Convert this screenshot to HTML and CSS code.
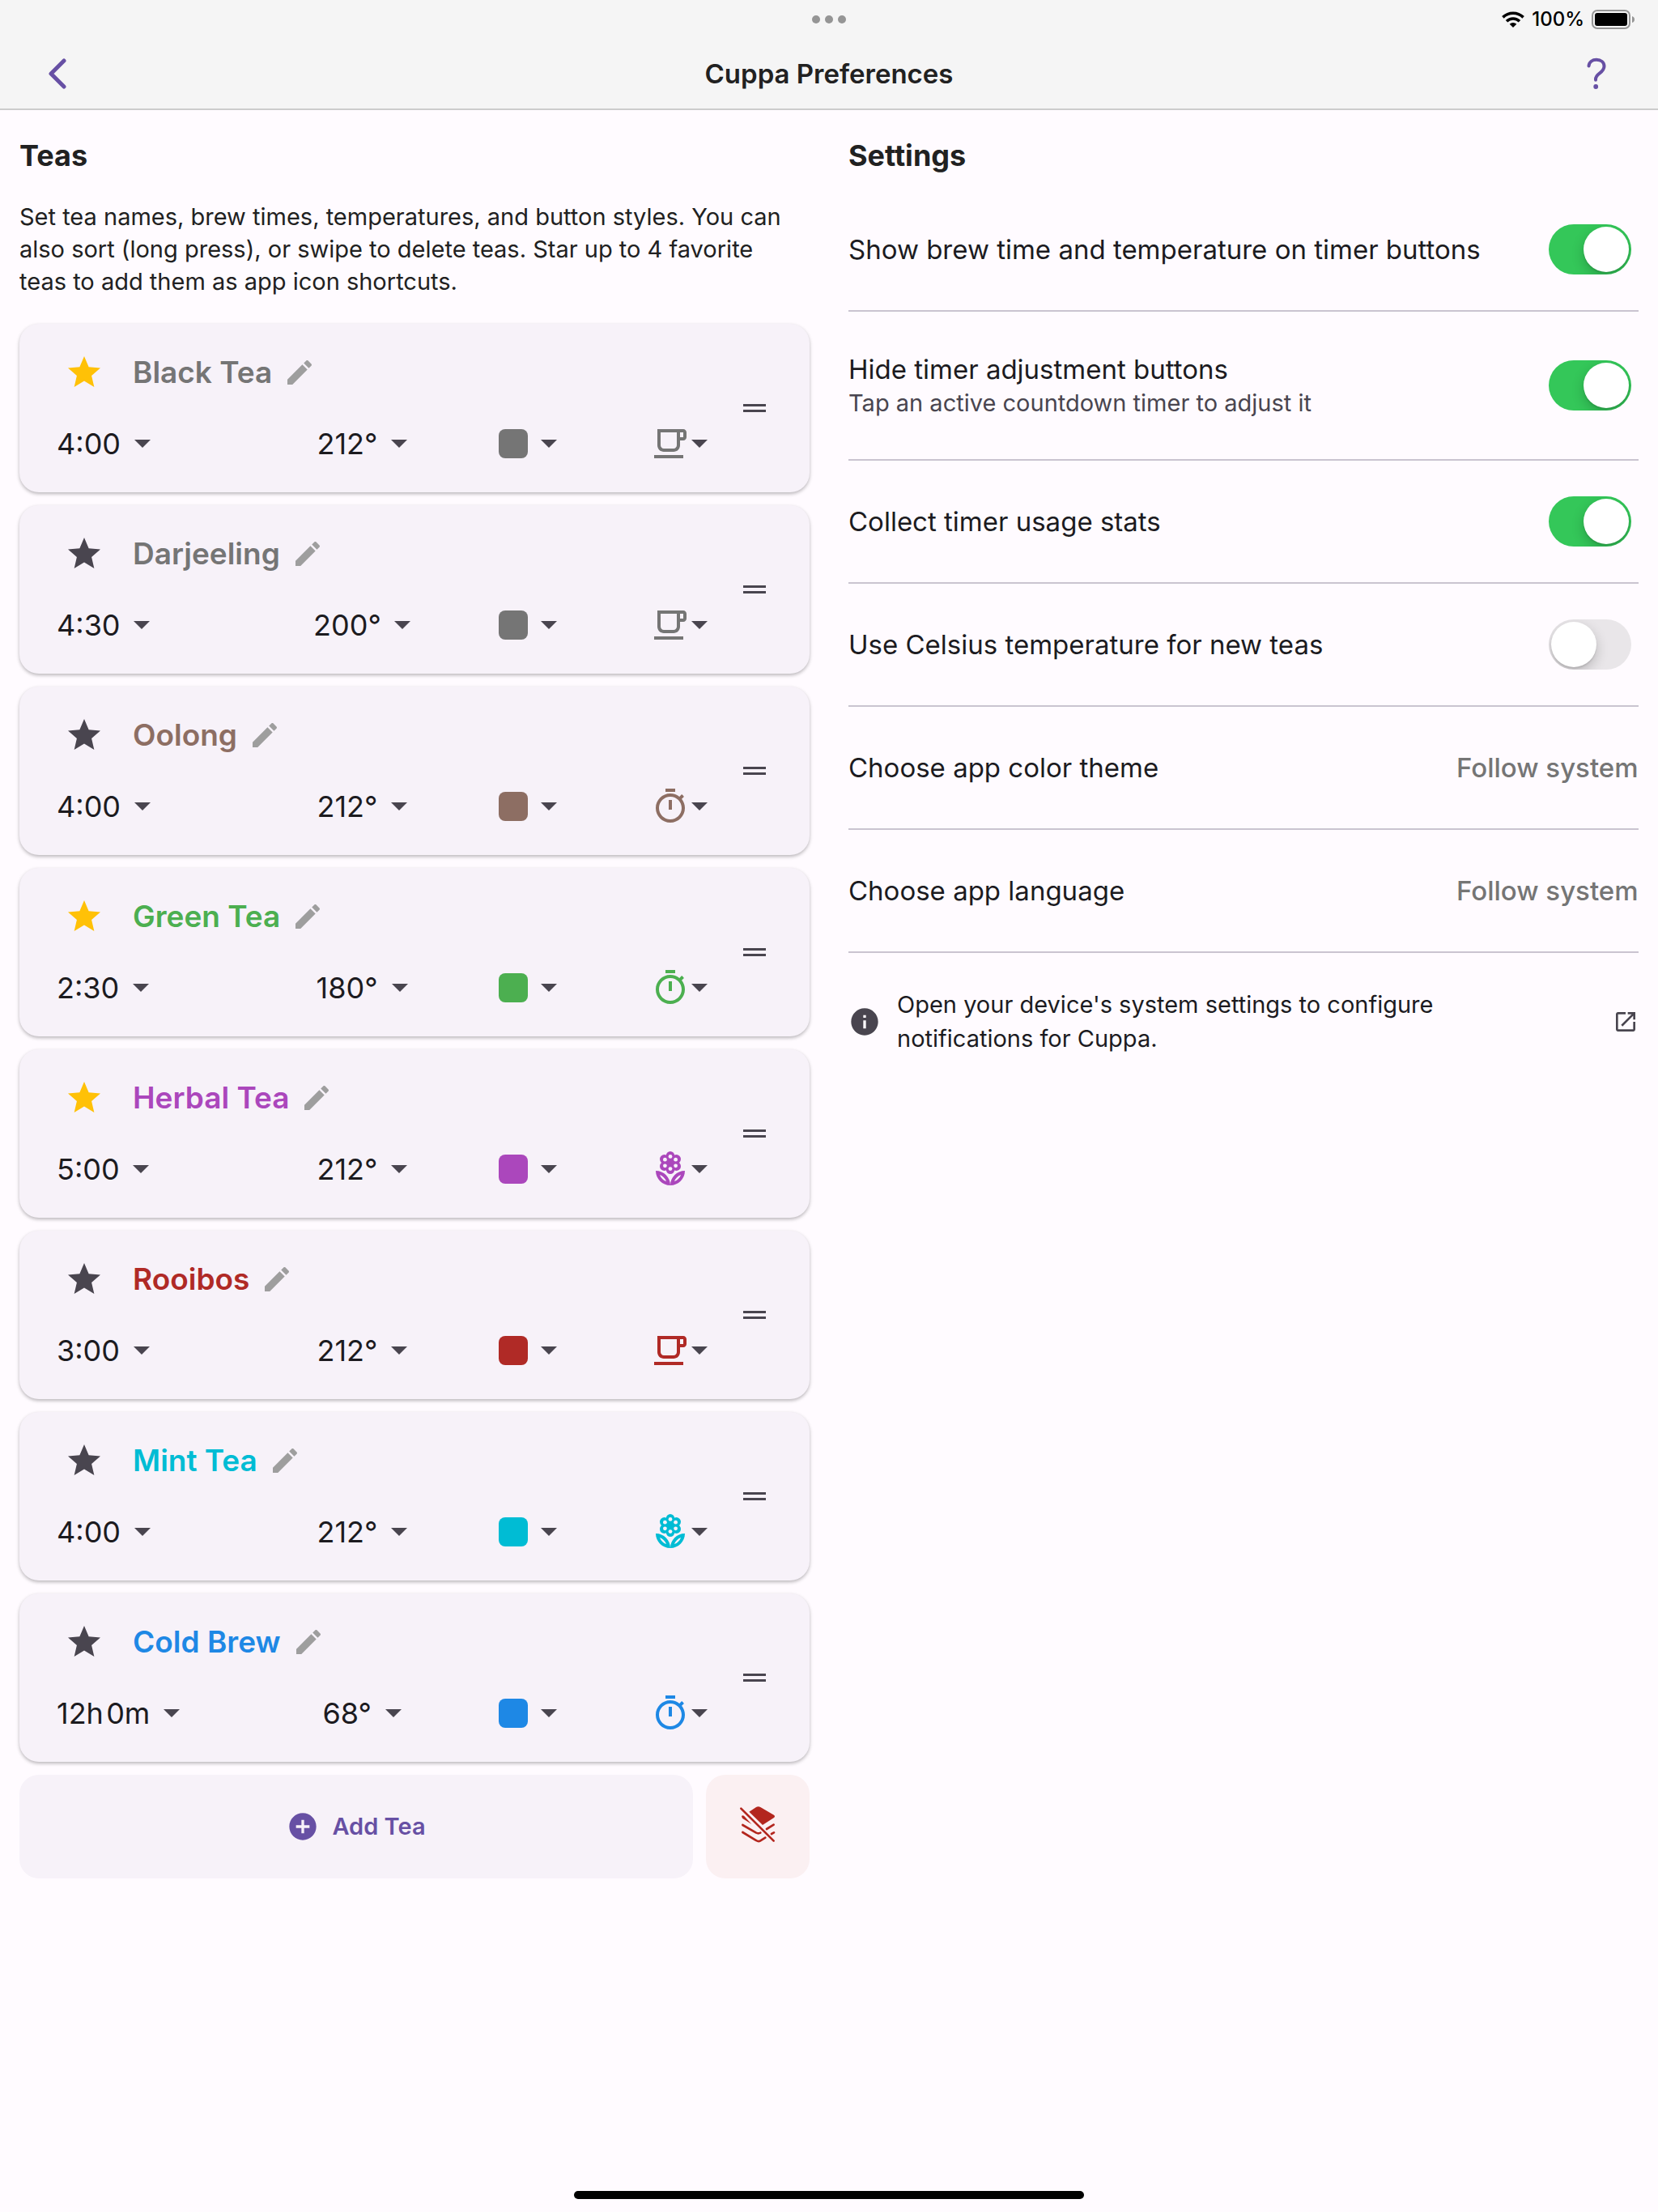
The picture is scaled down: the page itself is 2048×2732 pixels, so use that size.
FILE: index.html
```html
<!DOCTYPE html>
<html lang="en">
<head>
<meta charset="utf-8">
<meta name="viewport" content="width=device-width, initial-scale=1">
<title>Cuppa Preferences</title>
<link rel="stylesheet" href="styles.css">
</head>
<body>
<svg class="sprite" aria-hidden="true">
  <symbol id="star" viewBox="0 0 24 24"><path d="M12 17.27L18.18 21l-1.64-7.03L22 9.24l-7.19-.61L12 2 9.19 8.63 2 9.24l5.46 4.73L5.82 21z"/></symbol>
  <symbol id="edit" viewBox="0 0 24 24"><path d="M3 17.25V21h3.75L17.81 9.94l-3.75-3.75L3 17.25zM20.71 7.04c.39-.39.39-1.02 0-1.41l-2.34-2.34c-.39-.39-1.02-.39-1.41 0l-1.83 1.83 3.75 3.75 1.83-1.83z"/></symbol>
  <symbol id="arrow" viewBox="0 0 20 10"><path d="M0 0h20L10 10z"/></symbol>
  <symbol id="handle" viewBox="0 0 28 10"><path d="M0 0h28v3H0zM0 7h28v3H0z"/></symbol>
  <symbol id="cup" viewBox="0 0 24 24"><path d="M20 3H4v10c0 2.21 1.79 4 4 4h6c2.21 0 4-1.79 4-4v-3h2c1.11 0 2-.9 2-2V5c0-1.11-.89-2-2-2zm-4 10c0 1.1-.9 2-2 2H8c-1.1 0-2-.9-2-2V5h10v8zm4-5h-2V5h2v3zM2 19h18v2H2z"/></symbol>
  <symbol id="timer" viewBox="0 0 24 24"><path d="M15 1H9v2h6V1zm-4 13h2V8h-2v6zm8.03-6.61l1.42-1.42c-.43-.51-.9-.99-1.41-1.41l-1.42 1.42C16.07 4.74 14.12 4 12 4c-4.97 0-9 4.03-9 9s4.02 9 9 9 9-4.03 9-9c0-2.12-.74-4.07-1.97-5.61zM12 20c-3.87 0-7-3.13-7-7s3.13-7 7-7 7 3.13 7 7-3.13 7-7 7z"/></symbol>
  <symbol id="flower" viewBox="0 0 24 24">
    <path d="M12 22c4.97 0 9-4.03 9-9-4.97 0-9 4.03-9 9zm2.44-2.44c.71-1.9 2.22-3.42 4.12-4.12-.71 1.9-2.22 3.41-4.12 4.12zM3 13c0 4.97 4.03 9 9 9 0-4.97-4.03-9-9-9zm2.44 2.44c1.9.71 3.42 2.22 4.12 4.12-1.9-.71-3.41-2.22-4.12-4.12z"/>
    <circle cx="12" cy="3.6" r="2.6"/><circle cx="12" cy="12.4" r="2.6"/><circle cx="8.3" cy="5.8" r="2.8"/><circle cx="15.7" cy="5.8" r="2.8"/><circle cx="8.3" cy="10.2" r="2.8"/><circle cx="15.7" cy="10.2" r="2.8"/><circle cx="12" cy="8" r="4.4"/>
    <g class="petal-hole"><circle cx="12" cy="4.2" r="1.2"/><circle cx="12" cy="11.8" r="1.2"/><circle cx="8.7" cy="6.1" r="1.2"/><circle cx="15.3" cy="6.1" r="1.2"/><circle cx="8.7" cy="9.9" r="1.2"/><circle cx="15.3" cy="9.9" r="1.2"/></g>
  </symbol>
</svg>

<header class="header">
  <div class="status">
    <span class="dots" aria-hidden="true"><i></i><i></i><i></i></span>
    <div class="status-right">
      <svg class="wifi" viewBox="0 0 28 20" aria-hidden="true"><g fill="none" stroke="#000" stroke-width="3.6"><path d="M1.4 7.4a18 18 0 0 1 25.2 0"/><path d="M6 12.3a11.4 11.4 0 0 1 16 0"/></g><path d="M14 20l-4.3-4.3a6.2 6.2 0 0 1 8.6 0z"/></svg>
      <span>100%</span>
      <svg class="battery" viewBox="0 0 54 24" aria-hidden="true"><rect x="1" y="1" width="46" height="22" rx="6" fill="none" stroke="#959595" stroke-width="2"/><rect x="4" y="4" width="40" height="16" rx="3"/><path d="M50 8q3 1 3 4t-3 4z" fill="#959595"/></svg>
    </div>
  </div>
  <nav class="nav">
    <button class="icon-button back" aria-label="Back"><svg class="chevron" viewBox="0 0 24 40" aria-hidden="true"><path d="M21 4L5 20l16 16"/></svg></button>
    <h1>Cuppa Preferences</h1>
    <button class="icon-button help" aria-label="Help"><svg class="question" viewBox="0 0 24 40" aria-hidden="true"><path d="M2.5 10.5C3 5.5 7 2.8 12 2.8c5.5 0 9.5 3.2 9.5 8 0 4-2.3 6.200-5.500 8.600-3.400 2.500-5 4.300-5 7.600v.8"/><circle cx="11.2" cy="36" r="2.900"/></svg></button>
  </nav>
</header>

<main class="columns">
  <section>
    <h2>Teas</h2>
    <p class="intro">Set tea names, brew times, temperatures, and button styles. You can also sort (long press), or swipe to delete teas. Star up to 4 favorite teas to add them as app icon shortcuts.</p>
    <ul class="teas">
      <li class="tea gray">
        <div class="tea-body">
          <div class="tea-title"><button class="star on" aria-label="Unstar Black Tea"><svg><use href="#star"/></svg></button><button class="name">Black Tea<svg><use href="#edit"/></svg></button></div>
          <div class="tea-options">
            <label class="pick"><select aria-label="Brew time"><option>4:00</option></select><svg class="arrow"><use href="#arrow"/></svg></label>
            <label class="pick"><select aria-label="Temperature"><option>212°</option></select><svg class="arrow"><use href="#arrow"/></svg></label>
            <button class="pick" aria-label="Color"><span class="swatch"></span><svg class="arrow"><use href="#arrow"/></svg></button>
            <button class="pick icon-pick" aria-label="Icon"><svg class="glyph"><use href="#cup"/></svg><svg class="arrow"><use href="#arrow"/></svg></button>
          </div>
        </div>
        <button class="drag" aria-label="Reorder"><svg><use href="#handle"/></svg></button>
      </li>
      <li class="tea gray">
        <div class="tea-body">
          <div class="tea-title"><button class="star" aria-label="Star Darjeeling"><svg><use href="#star"/></svg></button><button class="name">Darjeeling<svg><use href="#edit"/></svg></button></div>
          <div class="tea-options">
            <label class="pick"><select aria-label="Brew time"><option>4:30</option></select><svg class="arrow"><use href="#arrow"/></svg></label>
            <label class="pick"><select aria-label="Temperature"><option>200°</option></select><svg class="arrow"><use href="#arrow"/></svg></label>
            <button class="pick" aria-label="Color"><span class="swatch"></span><svg class="arrow"><use href="#arrow"/></svg></button>
            <button class="pick icon-pick" aria-label="Icon"><svg class="glyph"><use href="#cup"/></svg><svg class="arrow"><use href="#arrow"/></svg></button>
          </div>
        </div>
        <button class="drag" aria-label="Reorder"><svg><use href="#handle"/></svg></button>
      </li>
      <li class="tea brown">
        <div class="tea-body">
          <div class="tea-title"><button class="star" aria-label="Star Oolong"><svg><use href="#star"/></svg></button><button class="name">Oolong<svg><use href="#edit"/></svg></button></div>
          <div class="tea-options">
            <label class="pick"><select aria-label="Brew time"><option>4:00</option></select><svg class="arrow"><use href="#arrow"/></svg></label>
            <label class="pick"><select aria-label="Temperature"><option>212°</option></select><svg class="arrow"><use href="#arrow"/></svg></label>
            <button class="pick" aria-label="Color"><span class="swatch"></span><svg class="arrow"><use href="#arrow"/></svg></button>
            <button class="pick icon-pick" aria-label="Icon"><svg class="glyph"><use href="#timer"/></svg><svg class="arrow"><use href="#arrow"/></svg></button>
          </div>
        </div>
        <button class="drag" aria-label="Reorder"><svg><use href="#handle"/></svg></button>
      </li>
      <li class="tea green">
        <div class="tea-body">
          <div class="tea-title"><button class="star on" aria-label="Unstar Green Tea"><svg><use href="#star"/></svg></button><button class="name">Green Tea<svg><use href="#edit"/></svg></button></div>
          <div class="tea-options">
            <label class="pick"><select aria-label="Brew time"><option>2:30</option></select><svg class="arrow"><use href="#arrow"/></svg></label>
            <label class="pick"><select aria-label="Temperature"><option>180°</option></select><svg class="arrow"><use href="#arrow"/></svg></label>
            <button class="pick" aria-label="Color"><span class="swatch"></span><svg class="arrow"><use href="#arrow"/></svg></button>
            <button class="pick icon-pick" aria-label="Icon"><svg class="glyph"><use href="#timer"/></svg><svg class="arrow"><use href="#arrow"/></svg></button>
          </div>
        </div>
        <button class="drag" aria-label="Reorder"><svg><use href="#handle"/></svg></button>
      </li>
      <li class="tea purple">
        <div class="tea-body">
          <div class="tea-title"><button class="star on" aria-label="Unstar Herbal Tea"><svg><use href="#star"/></svg></button><button class="name">Herbal Tea<svg><use href="#edit"/></svg></button></div>
          <div class="tea-options">
            <label class="pick"><select aria-label="Brew time"><option>5:00</option></select><svg class="arrow"><use href="#arrow"/></svg></label>
            <label class="pick"><select aria-label="Temperature"><option>212°</option></select><svg class="arrow"><use href="#arrow"/></svg></label>
            <button class="pick" aria-label="Color"><span class="swatch"></span><svg class="arrow"><use href="#arrow"/></svg></button>
            <button class="pick icon-pick" aria-label="Icon"><svg class="glyph"><use href="#flower"/></svg><svg class="arrow"><use href="#arrow"/></svg></button>
          </div>
        </div>
        <button class="drag" aria-label="Reorder"><svg><use href="#handle"/></svg></button>
      </li>
      <li class="tea red">
        <div class="tea-body">
          <div class="tea-title"><button class="star" aria-label="Star Rooibos"><svg><use href="#star"/></svg></button><button class="name">Rooibos<svg><use href="#edit"/></svg></button></div>
          <div class="tea-options">
            <label class="pick"><select aria-label="Brew time"><option>3:00</option></select><svg class="arrow"><use href="#arrow"/></svg></label>
            <label class="pick"><select aria-label="Temperature"><option>212°</option></select><svg class="arrow"><use href="#arrow"/></svg></label>
            <button class="pick" aria-label="Color"><span class="swatch"></span><svg class="arrow"><use href="#arrow"/></svg></button>
            <button class="pick icon-pick" aria-label="Icon"><svg class="glyph"><use href="#cup"/></svg><svg class="arrow"><use href="#arrow"/></svg></button>
          </div>
        </div>
        <button class="drag" aria-label="Reorder"><svg><use href="#handle"/></svg></button>
      </li>
      <li class="tea cyan">
        <div class="tea-body">
          <div class="tea-title"><button class="star" aria-label="Star Mint Tea"><svg><use href="#star"/></svg></button><button class="name">Mint Tea<svg><use href="#edit"/></svg></button></div>
          <div class="tea-options">
            <label class="pick"><select aria-label="Brew time"><option>4:00</option></select><svg class="arrow"><use href="#arrow"/></svg></label>
            <label class="pick"><select aria-label="Temperature"><option>212°</option></select><svg class="arrow"><use href="#arrow"/></svg></label>
            <button class="pick" aria-label="Color"><span class="swatch"></span><svg class="arrow"><use href="#arrow"/></svg></button>
            <button class="pick icon-pick" aria-label="Icon"><svg class="glyph"><use href="#flower"/></svg><svg class="arrow"><use href="#arrow"/></svg></button>
          </div>
        </div>
        <button class="drag" aria-label="Reorder"><svg><use href="#handle"/></svg></button>
      </li>
      <li class="tea blue">
        <div class="tea-body">
          <div class="tea-title"><button class="star" aria-label="Star Cold Brew"><svg><use href="#star"/></svg></button><button class="name">Cold Brew<svg><use href="#edit"/></svg></button></div>
          <div class="tea-options">
            <label class="pick"><select aria-label="Brew time"><option>12h&hairsp;0m</option></select><svg class="arrow"><use href="#arrow"/></svg></label>
            <label class="pick"><select aria-label="Temperature"><option>68°</option></select><svg class="arrow"><use href="#arrow"/></svg></label>
            <button class="pick" aria-label="Color"><span class="swatch"></span><svg class="arrow"><use href="#arrow"/></svg></button>
            <button class="pick icon-pick" aria-label="Icon"><svg class="glyph"><use href="#timer"/></svg><svg class="arrow"><use href="#arrow"/></svg></button>
          </div>
        </div>
        <button class="drag" aria-label="Reorder"><svg><use href="#handle"/></svg></button>
      </li>
    </ul>
    <div class="actions">
      <button class="add"><svg viewBox="0 0 24 24" aria-hidden="true"><path d="M12 2C6.48 2 2 6.48 2 12s4.48 10 10 10 10-4.48 10-10S17.52 2 12 2zm5 11h-4v4h-2v-4H7v-2h4V7h2v4h4v2z"/></svg>Add Tea</button>
      <button class="clear" aria-label="Remove all teas">
        <svg viewBox="126 126 144 144" aria-hidden="true">
          <path class="solid" d="M166 143L192 126q8-4 16 0L258 155q6 5 0 10L216 192zM138 160q2-6 9-2L175 189 141 167z"/>
          <path class="line" d="M136 131L257 251M142 192l50 29q8 4 16 0M231 207l26-16M142 219l50 30q8 6 15 2l19-12M249 225l9-5"/>
        </svg>
      </button>
    </div>
  </section>

  <section>
    <h2>Settings</h2>
    <div class="settings">
      <div class="setting"><label for="show">Show brew time and temperature on timer buttons</label><input class="switch" type="checkbox" id="show" checked></div>
      <div class="setting tall"><label for="hide">Hide timer adjustment buttons<small>Tap an active countdown timer to adjust it</small></label><input class="switch" type="checkbox" id="hide" checked></div>
      <div class="setting"><label for="stats">Collect timer usage stats</label><input class="switch" type="checkbox" id="stats" checked></div>
      <div class="setting"><label for="celsius">Use Celsius temperature for new teas</label><input class="switch" type="checkbox" id="celsius"></div>
      <div class="setting"><label for="theme">Choose app color theme</label><select class="choice" id="theme"><option>Follow system</option></select></div>
      <div class="setting"><label for="language">Choose app language</label><select class="choice" id="language"><option>Follow system</option></select></div>
    </div>
    <a class="info" href="#">
      <svg class="info-icon" viewBox="0 0 24 24" aria-hidden="true"><path d="M12 2C6.48 2 2 6.48 2 12s4.48 10 10 10 10-4.48 10-10S17.52 2 12 2zm1 15h-2v-6h2v6zm0-8h-2V7h2v2z"/></svg>
      <span>Open your device's system settings to configure notifications for Cuppa.</span>
      <svg class="open-icon" viewBox="0 0 24 24" aria-hidden="true"><path d="M19 19H5V5h7V3H5c-1.11 0-2 .9-2 2v14c0 1.1.89 2 2 2h14c1.1 0 2-.9 2-2v-7h-2v7zM14 3v2h3.59l-9.83 9.83 1.41 1.41L19 6.41V10h2V3h-7z"/></svg>
    </a>
  </section>
</main>
<footer class="home"><span></span></footer>
</body>
</html>
```

FILE: styles.css
```css
* { box-sizing: border-box; }

:root {
  --text: #1c1b1f;
  --muted: #49454f;
  --primary: #6750a4;
  --card: #f7f2f9;
}

body {
  margin: 0;
  min-height: 100vh;
  display: flex;
  flex-direction: column;
  background: #fffbff;
  color: var(--text);
  font-family: Inter, "Liberation Sans", sans-serif;
  font-size: 29px;
  line-height: 40px;
}

button, select {
  appearance: none;
  border: 0;
  padding: 0;
  margin: 0;
  background: none;
  color: inherit;
  font: inherit;
}

svg { display: block; fill: currentColor; flex: none; }
h1, h2, p, ul { margin: 0; padding: 0; }
.sprite { position: absolute; width: 0; height: 0; }

/* Header */
.header { background: #f5f5f5; border-bottom: 2px solid #ccc; }
.status {
  height: 48px;
  padding: 0 28px;
  display: grid;
  grid-template-columns: 1fr auto 1fr;
  align-items: center;
  color: #000;
  font-size: 24px;
  font-weight: 500;
}
.dots { grid-column: 2; display: flex; gap: 6px; }
.dots i { width: 10px; height: 10px; border-radius: 50%; background: #959595; }
.status-right { display: flex; align-items: center; justify-content: flex-end; gap: 9px; }
.wifi { width: 28px; height: 20px; }
.battery { width: 54px; height: 24px; }
.nav {
  height: 86px;
  display: grid;
  grid-template-columns: 1fr auto 1fr;
  align-items: center;
}
.nav h1 { font-size: 33px; line-height: 44px; font-weight: 600; color: #212121; }
.icon-button { width: 72px; height: 72px; display: grid; place-items: center; color: var(--primary); }
.icon-button svg { width: 24px; height: 40px; }
.back { margin-left: 34px; }
.help { margin-right: 40px; justify-self: end; }
.chevron, .question path { fill: none; stroke: currentColor; stroke-linecap: round; stroke-linejoin: round; }
.chevron { stroke-width: 5; }
.question path { stroke-width: 4; }

/* Columns */
.columns {
  flex: 1;
  display: grid;
  grid-template-columns: 1fr 1fr;
  gap: 48px;
  padding: 32px 24px;
}
h2 { font-size: 36px; line-height: 48px; font-weight: 700; color: #212121; }
.intro { max-width: 960px; margin: 32px 0; color: #212121; }

/* Tea list */
.teas { list-style: none; display: grid; gap: 16px; }
.tea {
  display: flex;
  align-items: center;
  gap: 44px;
  height: 208px;
  padding: 0 54px 0 46px;
  border-radius: 24px;
  background: var(--card);
  box-shadow: 0 2px 4px rgba(0, 0, 0, 0.28);
}
.tea-body { flex: 1; display: grid; gap: 40px; }
.tea-title { display: flex; align-items: center; gap: 36px; padding-left: 10px; }
.star { color: var(--muted); }
.star.on { color: #ffc107; }
.star svg { width: 48px; height: 48px; }
.name { display: flex; align-items: center; gap: 14px; font-size: 37px; font-weight: 600; color: var(--tea); }
.name svg { width: 40px; height: 40px; color: #9e9e9e; }
.tea-options {
  display: grid;
  grid-template-columns: 272fr 210fr 200fr 122fr;
  justify-items: center;
  align-items: center;
  font-size: 36px;
  line-height: 48px;
}
.pick { display: flex; align-items: center; gap: 16px; color: var(--muted); }
.pick:first-child { justify-self: start; }
.pick select { color: var(--text); }
.icon-pick { justify-self: end; gap: 2px; }
.arrow { width: 20px; height: 10px; }
.swatch { width: 36px; height: 36px; border-radius: 8px; background: var(--tea); }
.glyph { width: 48px; height: 48px; color: var(--tea); }
.petal-hole { fill: var(--card); }
.drag { color: var(--muted); }
.drag svg { width: 28px; height: 10px; }

.gray { --tea: #757575; }
.brown { --tea: #8d6e63; }
.green { --tea: #4caf50; }
.purple { --tea: #ab47bc; }
.red { --tea: #b02a26; }
.cyan { --tea: #00bcd4; }
.blue { --tea: #1e88e5; }

.actions { display: flex; gap: 16px; margin-top: 16px; }
.actions button { height: 128px; border-radius: 24px; display: flex; align-items: center; justify-content: center; gap: 16px; }
.add { flex: 1; background: var(--card); color: var(--primary); font-weight: 600; }
.add svg { width: 40px; height: 40px; }
.clear { width: 128px; background: #fbf0f2; color: #b3261e; }
.clear svg { width: 48px; height: 48px; overflow: visible; }
.clear .line { fill: none; stroke: currentColor; stroke-width: 8; stroke-linecap: round; }

/* Settings */
.settings { margin-top: 17px; }
.setting {
  min-height: 152px;
  display: flex;
  align-items: center;
  justify-content: space-between;
  border-bottom: 2px solid #cac4d0;
  font-size: 33px;
  line-height: 44px;
}
.setting.tall { min-height: 184px; }
.setting small { display: block; font-size: 29px; line-height: 40px; color: var(--muted); }
.choice { color: #757575; font-weight: 500; }
.switch {
  appearance: none;
  width: 102px;
  height: 62px;
  margin: 0 9px 0 0;
  padding: 3px;
  border-radius: 31px;
  background: #e9e6e9;
  display: flex;
  overflow: hidden;
  flex: none;
}
.switch::before {
  content: "";
  width: 56px;
  height: 56px;
  border-radius: 50%;
  background: #fff;
  box-shadow: 0 6px 16px rgba(0, 0, 0, 0.2), 0 2px 2px rgba(0, 0, 0, 0.1);
}
.switch:checked { background: #34c759; justify-content: flex-end; }

.info { display: flex; align-items: center; margin-top: 43px; color: var(--muted); text-decoration: none; }
.info span { flex: 1; max-width: 760px; margin: 0 auto 0 20px; color: var(--text); line-height: 42px; }
.info-icon { width: 40px; height: 40px; }
.open-icon { width: 32px; height: 32px; }

.home { display: flex; justify-content: center; padding: 12px 0 16px; }
.home span { width: 630px; height: 10px; border-radius: 5px; background: #000; }
```
